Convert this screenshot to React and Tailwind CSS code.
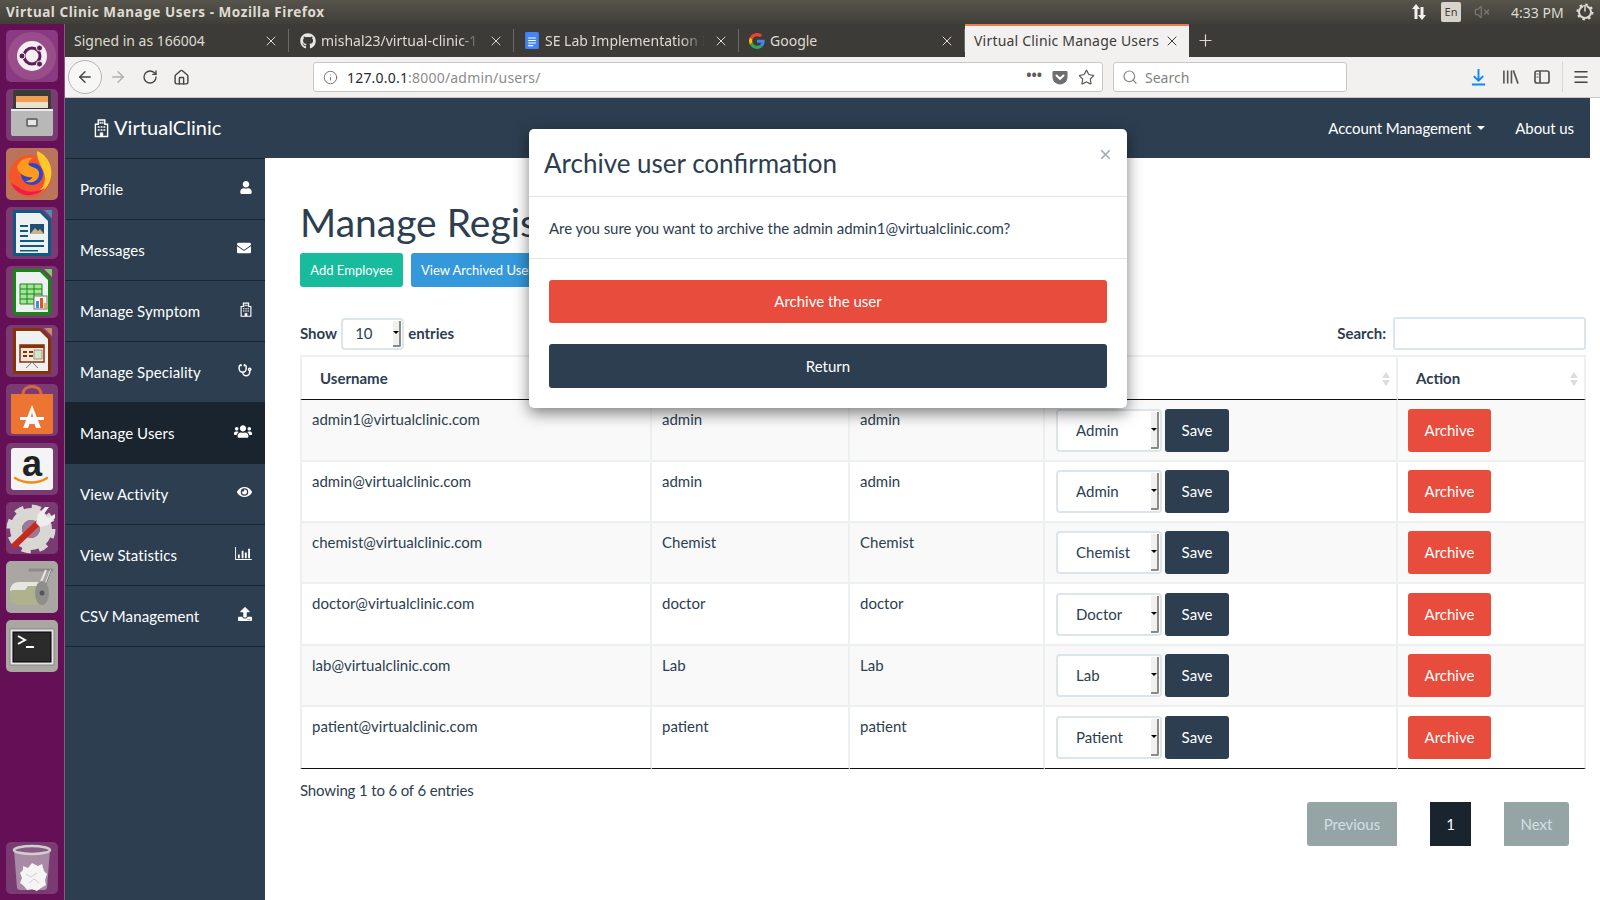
import { useState } from 'react';
import {
  ArrowLeft, ArrowRight, RotateCw, Home, Info, Star, Search, Menu, Plus, X, VolumeX, Stethoscope,
} from 'lucide-react';
import { FaGithub, FaUser, FaEnvelope, FaUsers, FaEye, FaUpload } from 'react-icons/fa';

const HospitalIcon = ({ className }) => (
  <svg viewBox="0 0 16 20" className={className} fill="none" stroke="currentColor" strokeWidth="1.5">
    <path d="M1.5 19V6h3V1.5h7V6h3v13z" />
    <path d="M6.5 3.2v2.6M9.5 3.2v2.6M6.5 4.5h3" strokeWidth="1" />
    <path d="M4 9h2M7 9h2M10 9h2M4 12h2M7 12h2M10 12h2" strokeWidth="1.6" />
    <path d="M6.5 19v-4h3v4" fill="currentColor" strokeWidth="0.5" />
  </svg>
);

const BarsIcon = ({ className }) => (
  <svg viewBox="0 0 18 14" className={className} fill="currentColor">
    <path d="M0 0h1v13h17v1H0z" />
    <path d="M3 8h2v4H3zM7 4h2v8H7zM10.500 6h2v6h-2zM14 2h2v10h-2z" />
  </svg>
);

const Pocket = () => (
  <svg viewBox="0 0 16 16" className="w-[16px] h-[16px]">
    <path d="M1 2.500h14v6a7 6.500 0 0 1-14 0z" fill="#6e6e6e" stroke="#6e6e6e" strokeLinejoin="round" />
    <path d="M4.500 6.500L8 9.800l3.500-3.300" fill="none" stroke="#fff" strokeWidth="2" strokeLinecap="round" />
  </svg>
);

const GoogleG = () => (
  <svg viewBox="0 0 48 48" className="w-[16px] h-[16px] shrink-0">
    <path fill="#EA4335" d="M24 9.500c3.500 0 6.700 1.300 9.100 3.500l6.800-6.800C35.800 2.400 30.300 0 24 0 14.600 0 6.500 5.400 2.600 13.200l7.900 6.200C12.400 13.700 17.700 9.500 24 9.500z" />
    <path fill="#4285F4" d="M46.900 24.500c0-1.600-.1-3.100-.4-4.500H24v9h12.900c-.6 3-2.200 5.500-4.700 7.200l7.700 6c4.500-4.200 7-10.300 7-17.700z" />
    <path fill="#FBBC05" d="M10.500 28.600c-.5-1.400-.8-3-.8-4.600s.3-3.200.8-4.600l-7.900-6.200C.9 16.500 0 20.100 0 24s.9 7.500 2.600 10.800z" />
    <path fill="#34A853" d="M24 48c6.500 0 11.900-2.100 15.900-5.800l-7.700-6c-2.200 1.400-4.900 2.300-8.200 2.300-6.300 0-11.600-4.200-13.500-9.900l-7.900 6.100C6.500 42.600 14.600 48 24 48z" />
  </svg>
);

const DocsIcon = () => (
  <svg viewBox="0 0 16 20" className="w-[16px] h-[17px] shrink-0">
    <rect width="16" height="20" rx="1.500" fill="#4285f4" />
    <path d="M3.500 7h9M3.500 10h9M3.500 13h9M3.500 16h6" stroke="#fff" strokeWidth="1.300" />
  </svg>
);

const tabs = [
  { title: 'Signed in as 166004', width: 'w-[224px]', pad: 'pl-[9px]', icon: null, fade: '' },
  { title: 'mishal23/virtual-clinic-1', width: 'w-[225px]', pad: 'pl-[11px]', icon: <FaGithub className="w-[16px] h-[16px] text-[#e8e6e0] shrink-0" />, fade: '[mask-image:linear-gradient(to_right,black_88%,transparent)]' },
  { title: 'SE Lab Implementation I', width: 'w-[225px]', pad: 'pl-[10px]', icon: <DocsIcon />, fade: '[mask-image:linear-gradient(to_right,black_85%,transparent)]' },
  { title: 'Google', width: 'w-[226px]', pad: 'pl-[10px]', icon: <GoogleG />, fade: '' },
];

// launcher icons, all drawn in a 52x52 box
const launcher = [
  {
    name: 'dash', tile: 'bg-[#8a3a80]',
    art: (
      <>
        <circle cx="26" cy="26" r="24" fill="#a0568f" opacity="0.7" />
        <circle cx="26" cy="26" r="15" fill="#f4eef2" />
        <circle cx="26" cy="26" r="8" fill="none" stroke="#5e1f57" strokeWidth="3" />
        <circle cx="33.500" cy="18" r="3" fill="#5e1f57" stroke="#f4eef2" />
        <circle cx="33.500" cy="34" r="3" fill="#5e1f57" stroke="#f4eef2" />
        <circle cx="16" cy="26" r="3" fill="#5e1f57" stroke="#f4eef2" />
      </>
    ),
  },
  {
    name: 'files', tile: 'bg-[#7a3a72]',
    art: (
      <>
        <rect x="7" y="1" width="38" height="22" rx="2" fill="#3b3b3b" />
        <rect x="10" y="7" width="32" height="6" fill="#ef9f52" />
        <rect x="10" y="13" width="32" height="6" fill="#e9e2cc" />
        <rect x="5" y="20" width="42" height="27" rx="2" fill="#b8b8b8" />
        <rect x="5" y="20" width="42" height="2" fill="#ececec" />
        <rect x="20" y="29" width="12" height="9" rx="2" fill="#707070" />
        <rect x="22" y="31" width="8" height="5" fill="#e6e6e6" />
      </>
    ),
  },
  {
    name: 'firefox', tile: 'bg-[#b9745a]',
    art: (
      <>
        <circle cx="24" cy="28" r="21" fill="#f4552a" />
        <path d="M31 3c15 6 19 25 9 37-4 4-9 7-15 7 12-3 17-14 12-25-2-5-6-9-6-19z" fill="#ffc72e" />
        <circle cx="26" cy="26" r="11" fill="#2f46c8" />
        <path d="M11 19c3-8 10-10 16-9-5 3-6 6-3 8 5 2 10 3 9 9-1 7-9 9-14 6 4 0 7-2 7-4-5 1-13-2-15-10z" fill="#ff9a1f" />
        <path d="M5 35c4 9 12 13 20 12 6 0 11-3 14-7-6 4-18 6-27-1z" fill="#e9204f" />
      </>
    ),
  },
  {
    name: 'writer', tile: 'bg-[#7a3a72]',
    art: (
      <>
        <path d="M7 3h28l10 10v34a2 2 0 0 1-2 2H9a2 2 0 0 1-2-2z" fill="#0f5a85" />
        <path d="M10 6h24l8 8v32H10z" fill="#eef1f2" />
        <path d="M38 3h8v8z" fill="#4b8fb8" />
        <path d="M14 18h8v2h-8zM14 23h8v2h-8zM14 28h8v2h-8zM14 33h24v2H14zM14 38h24v2H14zM14 43h18v1.500H14z" fill="#0f5a85" />
        <rect x="24" y="17" width="14" height="10" fill="#234f72" />
        <path d="M24 27l5-6 3 3 2-2 4 5z" fill="#c9b48a" />
      </>
    ),
  },
  {
    name: 'calc', tile: 'bg-[#7a3a72]',
    art: (
      <>
        <path d="M7 3h28l10 10v34a2 2 0 0 1-2 2H9a2 2 0 0 1-2-2z" fill="#128a12" />
        <path d="M10 6h24l8 8v32H10z" fill="#eef1f2" />
        <path d="M38 3h8v8z" fill="#7ccf6d" />
        <rect x="14" y="18" width="22" height="20" fill="#a7e29a" />
        <path d="M14 18h22v20H14zM14 23h22M14 28h22M14 33h22M21 18v20M28 18v20" fill="none" stroke="#128a12" />
        <rect x="28" y="30" width="13" height="13" fill="#f4f4f4" stroke="#777" />
        <path d="M30 35h3v7h-3z" fill="#3c8fd8" />
        <path d="M34 32h3v10h-3z" fill="#e0552b" />
        <path d="M38 37h2v5h-2z" fill="#efb72e" />
      </>
    ),
  },
  {
    name: 'impress', tile: 'bg-[#7a3a72]',
    art: (
      <>
        <path d="M7 3h28l10 10v34a2 2 0 0 1-2 2H9a2 2 0 0 1-2-2z" fill="#8a3108" />
        <path d="M10 6h24l8 8v32H10z" fill="#eef1f2" />
        <path d="M38 3h8v8z" fill="#c98a66" />
        <rect x="14" y="20" width="24" height="17" fill="#f7e7d9" stroke="#8a3108" strokeWidth="1.500" />
        <rect x="14" y="20" width="24" height="3" fill="#8a3108" />
        <path d="M17 26h4v2h-4zM17 30h4v2h-4zM23 26h4v2h-4zM23 30h4v2h-4z" fill="#8a3108" />
        <rect x="28" y="25" width="8" height="9" fill="#d4e6c8" stroke="#666" strokeWidth="0.600" />
        <path d="M20 43l6-6 6 6" fill="none" stroke="#777" />
      </>
    ),
  },
  {
    name: 'software', tile: 'bg-[#7a3a72]',
    art: (
      <>
        <path d="M17 10c0-10 18-10 18 0" fill="none" stroke="#d7693a" strokeWidth="3" />
        <path d="M5 10h42v38a2 2 0 0 1-2 2H7a2 2 0 0 1-2-2z" fill="#ee7434" />
        <path d="M26 21l-9 23h5l1.500-4h5l1.500 4h5zM25 33l1-5 1 5z" fill="#fff" />
        <rect x="14" y="33" width="24" height="3" fill="#fff" />
      </>
    ),
  },
  {
    name: 'amazon', tile: 'bg-[#7a3a72]',
    art: (
      <>
        <rect x="5" y="5" width="42" height="42" rx="3" fill="#f4f4f4" />
        <text x="26" y="33" textAnchor="middle" fontFamily="'Liberation Sans', sans-serif" fontWeight="700" fontSize="36" fill="#222">a</text>
        <path d="M9 35c10 6 23 6 32 0" fill="none" stroke="#f08c14" strokeWidth="2.500" strokeLinecap="round" />
      </>
    ),
  },
  {
    name: 'settings', tile: 'bg-[#7a3a72]',
    art: (
      <>
        <circle cx="25" cy="27" r="15" fill="none" stroke="#d9d7d3" strokeWidth="12" />
        <circle cx="25" cy="27" r="22" fill="none" stroke="#d9d7d3" strokeWidth="5" strokeDasharray="9 8.300" />
        <circle cx="25" cy="27" r="9" fill="#9a7a94" />
        <path d="M9 43L32 21" stroke="#c8281e" strokeWidth="6" strokeLinecap="round" />
        <path d="M30 21l2-9 7-7 4 0-5 7 4 4 7-4 0 4-7 7-8 2z" fill="#eeeeee" />
      </>
    ),
  },
  {
    name: 'disks', tile: 'bg-[#aaa6a2]',
    art: (
      <>
        <path d="M24 9h22" stroke="#8b8b88" strokeWidth="3" strokeLinecap="round" />
        <path d="M45 9L36 33M40 9L32 28" stroke="#e4e4e2" strokeWidth="2" />
        <path d="M45.500 9L36.500 33" stroke="#777" strokeWidth="1" />
        <rect x="4" y="21" width="35" height="23" rx="9" fill="#aeb38e" />
        <path d="M4 30c0-5 3-9 9-9h26v4H22l-3 4H7z" fill="#e6e6de" />
        <ellipse cx="36" cy="32" rx="7" ry="12" fill="#8e8e8c" />
        <circle cx="36" cy="32" r="2.500" fill="#555" />
      </>
    ),
  },
  {
    name: 'terminal', tile: 'bg-[#aaa6a2]',
    art: (
      <>
        <rect x="4" y="9" width="44" height="36" fill="#e6e6e6" stroke="#8a8a8a" />
        <rect x="7" y="12" width="38" height="30" fill="#2b2b2b" stroke="#000" />
        <path d="M12 16l7 4-7 4" fill="none" stroke="#fff" strokeWidth="2" />
        <path d="M20 27h8" stroke="#fff" strokeWidth="2" />
      </>
    ),
  },
];

const trash = {
  name: 'trash', tile: 'bg-[#7a3a72]',
  art: (
    <>
      <path d="M8 8l3 38a3 3 0 0 0 3 2h24a3 3 0 0 0 3-2l3-38z" fill="#a98aa4" />
      <ellipse cx="26" cy="8" rx="18" ry="4" fill="#8a5a84" stroke="#cfcfcf" strokeWidth="2.500" />
      <path d="M17 24l5 2 4-5 6 3 4-2 2 7 3 3-2 6 1 5-5 3-4 3-5-2-5 1-3-4-4-3 2-5-2-5 3-3z" fill="#f5f5f5" />
      <path d="M20 32l5 3 6-4M23 41l5-4 5 4" fill="none" stroke="#cfcfcf" />
    </>
  ),
};

const sideItems = [
  { label: 'Profile', icon: <FaUser className="w-[12px] h-[13px]" /> },
  { label: 'Messages', icon: <FaEnvelope className="w-[16px] h-[14px]" /> },
  { label: 'Manage Symptom', icon: <HospitalIcon className="w-[12px] h-[15px]" /> },
  { label: 'Manage Speciality', icon: <Stethoscope className="w-[14px] h-[15px]" strokeWidth={2.500} /> },
  { label: 'Manage Users', icon: <FaUsers className="w-[18px] h-[17px]" />, active: true },
  { label: 'View Activity', icon: <FaEye className="w-[15px] h-[14px]" /> },
  { label: 'View Statistics', icon: <BarsIcon className="w-[17px] h-[13px]" /> },
  { label: 'CSV Management', icon: <FaUpload className="w-[14px] h-[14px]" /> },
];

const users = [
  { email: 'admin1@virtualclinic.com', name: 'admin', type: 'admin', role: 'Admin', h: 'h-[62px]' },
  { email: 'admin@virtualclinic.com', name: 'admin', type: 'admin', role: 'Admin', h: 'h-[61px]' },
  { email: 'chemist@virtualclinic.com', name: 'Chemist', type: 'Chemist', role: 'Chemist', h: 'h-[61px]' },
  { email: 'doctor@virtualclinic.com', name: 'doctor', type: 'doctor', role: 'Doctor', h: 'h-[62px]' },
  { email: 'lab@virtualclinic.com', name: 'Lab', type: 'Lab', role: 'Lab', h: 'h-[61px]' },
  { email: 'patient@virtualclinic.com', name: 'patient', type: 'patient', role: 'Patient', h: 'h-[62px]' },
];

const SortArrows = () => (
  <span className="absolute right-[6px] top-[15px] flex flex-col gap-[2px]">
    <span className="w-0 h-0 border-x-[4px] border-x-transparent border-b-[6px] border-b-[#dcdcdc]" />
    <span className="w-0 h-0 border-x-[4px] border-x-transparent border-t-[6px] border-t-[#dcdcdc]" />
  </span>
);

// the old Firefox drop-down: a white box with a bevelled arrow strip on the right
const OldSelect = ({ value, options, className, pad = 'pl-[18px]' }) => {
  const [current, setCurrent] = useState(value);
  return (
    <span className={`relative inline-block ${className}`}>
      <select
        value={current}
        onChange={(e) => setCurrent(e.target.value)}
        className={`appearance-none w-full h-full bg-white border-2 border-[#dce4ec] rounded-[4px] ${pad} text-[15px] text-[#2c3e50] outline-none`}
      >
        {options.map((o) => <option key={o}>{o}</option>)}
      </select>
      <span className="absolute right-[3px] top-[3px] bottom-[3px] w-[8px] bg-[#f1f0ee] border-r-2 border-b-2 border-[#8a8a86] rounded-br-[2px] flex items-center justify-center pointer-events-none">
        <span className="w-0 h-0 border-x-[3px] border-x-transparent border-t-[3px] border-t-black" />
      </span>
    </span>
  );
};

const App = () => {
  return (
    <div className="w-[1600px] h-[900px] overflow-hidden flex flex-col bg-white font-['Lato',sans-serif] text-[15px] text-[#2c3e50]">
      {/* ubuntu panel */}
      <div className="h-[24px] shrink-0 bg-gradient-to-b from-[#57544b] to-[#3f3e39] flex items-center pl-[6px] pr-[6px] font-['Noto_Sans',sans-serif] text-[#dfdbd2]">
        <span className="text-[13.500px] font-bold tracking-[0.55px]">Virtual Clinic Manage Users - Mozilla Firefox</span>
        <div className="ml-auto flex items-center">
          <svg viewBox="0 0 18 18" className="w-[18px] h-[18px] mr-[13px]" fill="#f2f1ed">
            <path d="M6 1l4 5H7.500v10h-3V6H2zM12 17l-4-5h2.500V4h3v8H16z" />
          </svg>
          <span className="w-[20px] h-[20px] bg-[#d8d4cc] rounded-[2px] text-[#3c3b37] text-[11px] flex items-center justify-center mr-[13px]">En</span>
          <VolumeX className="w-[16px] h-[16px] text-[#77756d] mr-[21px]" />
          <span className="text-[14px] w-[54px] text-[#dfdbd2] mr-[11px]">4:33 PM</span>
          <svg viewBox="0 0 18 18" className="w-[18px] h-[18px]" fill="none" stroke="#dfdbd2">
            <circle cx="9" cy="9" r="6" strokeWidth="2" />
            <circle cx="9" cy="9" r="7.500" strokeWidth="2" strokeDasharray="2.500 3.390" />
            <circle cx="9" cy="9" r="3.500" stroke="#3f3e39" strokeWidth="1.500" />
            <path d="M9 3v6" stroke="#3f3e39" strokeWidth="3" />
            <path d="M9 2.500v6" strokeWidth="1.500" />
          </svg>
        </div>
      </div>

      <div className="flex-1 flex min-h-0">
        {/* launcher */}
        <div className="w-[65px] shrink-0 bg-[#640f56] border-r border-[#8a5a82] flex flex-col items-start pl-[6px] pt-[6px] pb-[6px] gap-[7px]">
          {launcher.map((item) => (
            <div key={item.name} className={`w-[52px] h-[52px] rounded-[5px] ${item.tile}`}>
              <svg viewBox="0 0 52 52" className="w-[52px] h-[52px]">{item.art}</svg>
            </div>
          ))}
          <div className={`mt-auto w-[52px] h-[52px] rounded-[5px] ${trash.tile}`}>
            <svg viewBox="0 0 52 52" className="w-[52px] h-[52px]">{trash.art}</svg>
          </div>
        </div>

        <div className="flex-1 min-w-0 flex flex-col relative">
          {/* firefox tabs */}
          <div className="h-[33px] shrink-0 bg-[#3c3b37] flex items-center font-['Noto_Sans',sans-serif] text-[14px] text-[#dfdbd2]">
            {tabs.map((t) => (
              <div key={t.title} className={`${t.width} ${t.pad} h-[23px] flex items-center gap-[5px] border-r border-[#6b6a64] pr-[9px] shrink-0`}>
                {t.icon}
                <span className={`flex-1 whitespace-nowrap overflow-hidden ${t.fade}`}>{t.title}</span>
                <X className="w-[16px] h-[16px] shrink-0 ml-[3px]" strokeWidth={1.500} />
              </div>
            ))}
            <div className="w-[224px] h-[33px] pl-[9px] pr-[9px] pb-[2px] bg-[#f2f1f0] border-t-2 border-[#ef7a4f] text-[#3c3b37] flex items-center shrink-0">
              <span className="flex-1 whitespace-nowrap overflow-hidden tracking-[0.2px]">Virtual Clinic Manage Users</span>
              <X className="w-[16px] h-[16px] shrink-0" strokeWidth={1.500} />
            </div>
            <Plus className="w-[19px] h-[19px] ml-[7px] text-[#dfdbd2]" strokeWidth={1.500} />
          </div>

          {/* firefox toolbar */}
          <div className="h-[41px] shrink-0 bg-[#f2f1f0] border-b border-[#c8c7c5] flex items-center pl-[3px] font-['Noto_Sans',sans-serif] text-[14px]">
            <span className="w-[34px] h-[34px] rounded-full border border-[#b5b4b2] bg-[#f7f7f6] flex items-center justify-center shrink-0">
              <ArrowLeft className="w-[18px] h-[18px] text-[#45443f]" strokeWidth={1.800} />
            </span>
            <ArrowRight className="w-[18px] h-[18px] text-[#b0afac] ml-[7px]" strokeWidth={1.800} />
            <RotateCw className="w-[16px] h-[16px] text-[#45443f] ml-[15px]" strokeWidth={2} />
            <Home className="w-[17px] h-[17px] text-[#45443f] ml-[15px]" strokeWidth={2} />
            <div className="w-[790px] h-[30px] ml-[123px] bg-white border border-[#c8c7c5] rounded-[3px] flex items-center pl-[9px] pr-[7px]">
              <Info className="w-[15px] h-[15px] text-[#77766f]" strokeWidth={1.600} />
              <span className="ml-[9px] text-[#2a2a28] tracking-[0.2px]">127.0.0.1</span>
              <span className="text-[#8d8c89] tracking-[0.2px]">:8000/admin/users/</span>
              <span className="ml-auto text-[#5c5b58] font-bold text-[14px] mb-[6px]">•••</span>
              <span className="ml-[10px]"><Pocket /></span>
              <Star className="w-[17px] h-[17px] text-[#5c5b58] ml-[10px]" strokeWidth={1.700} />
            </div>
            <div className="w-[234px] h-[30px] ml-[10px] bg-white border border-[#c8c7c5] rounded-[3px] flex items-center pl-[8px]">
              <Search className="w-[16px] h-[16px] text-[#85847f]" strokeWidth={1.800} />
              <span className="ml-[7px] text-[#85847f]">Search</span>
            </div>
            <svg viewBox="0 0 16 18" className="w-[15px] h-[17px] ml-[124px]" fill="none" stroke="#0a84ff" strokeWidth="2">
              <path d="M8 0v12M3 7.500l5 5 5-5M1 16.500h14" />
            </svg>
            <svg viewBox="0 0 18 16" className="w-[17px] h-[16px] ml-[16px]" fill="none" stroke="#55544f" strokeWidth="1.700">
              <path d="M2 1v14M6 1v14M10 1v14M12 1l5 14" />
            </svg>
            <svg viewBox="0 0 16 16" className="w-[16px] h-[16px] ml-[15px]" fill="none" stroke="#55544f" strokeWidth="1.700">
              <rect x="1" y="2" width="14" height="12" rx="2" />
              <path d="M6 2v12" />
              <path d="M2.500 5h2M2.500 8h2" strokeWidth="1.200" />
            </svg>
            <span className="w-px h-[30px] bg-[#d6d5d3] ml-[12px]" />
            <Menu className="w-[18px] h-[18px] text-[#45443f] ml-[9px]" strokeWidth={2} />
          </div>

          {/* page */}
          <div className="flex-1 min-h-0 flex flex-col">
            <div className="h-[60px] w-[1525px] shrink-0 bg-[#2c3e50] flex items-center text-white">
              <div className="flex items-center pl-[29px]">
                <HospitalIcon className="w-[15px] h-[20px]" />
                <span className="text-[20px] leading-[26px] ml-[5px] -mt-[2px] tracking-[0.05px]">VirtualClinic</span>
              </div>
              <div className="ml-auto flex items-center pr-[16px]">
                <span className="tracking-[-0.1px]">Account Management</span>
                <span className="ml-[6px] w-0 h-0 border-x-[4px] border-x-transparent border-t-[4px] border-t-white" />
                <span className="ml-[30px] tracking-[-0.1px]">About us</span>
              </div>
            </div>

            <div className="flex-1 min-h-0 flex">
              {/* sidebar */}
              <div className="w-[200px] shrink-0 bg-[#2c3e50] text-white border-t border-[#1a252f]">
                {sideItems.map((item) => (
                  <div
                    key={item.label}
                    className={`h-[61px] flex items-center pl-[15px] pr-[13px] border-b border-[#1a252f] ${item.active ? 'bg-[#1a242f]' : ''}`}
                  >
                    <span className="tracking-[0.1px]">{item.label}</span>
                    <span className="ml-auto -mt-[4px]">{item.icon}</span>
                  </div>
                ))}
              </div>

              {/* main */}
              <div className="w-[1325px] pl-[35px] pr-[4px] min-w-0">
                <h1 className="text-[39px] leading-[43px] mt-[43px]">Manage Registered Users</h1>
                <div className="flex gap-[8px] mt-[9px]">
                  <button className="w-[103px] h-[34px] pt-[1px] bg-[#18bc9c] text-white text-[13px] rounded-[3px]">Add Employee</button>
                  <button className="h-[34px] pt-[1px] px-[10px] bg-[#3498db] text-white text-[13px] rounded-[3px]">View Archived Users</button>
                </div>

                <div className="flex items-center mt-[30px] h-[33px] font-bold">
                  <span>Show</span>
                  <OldSelect value="10" options={['10', '25', '50', '100']} className="w-[63px] h-[32px] ml-[4px] mr-[4px] font-normal" pad="pl-[12px]" />
                  <span>entries</span>
                  <span className="ml-auto mr-[7px]">Search:</span>
                  <input className="w-[193px] h-[33px] border-2 border-[#dce4ec] rounded-[3px] outline-none" />
                </div>

                <table className="w-[1286px] table-fixed border-separate border-spacing-0 mt-[5px]">
                  <colgroup>
                    <col className="w-[352px]" />
                    <col className="w-[198px]" />
                    <col className="w-[195px]" />
                    <col className="w-[353px]" />
                    <col className="w-[188px]" />
                  </colgroup>
                  <thead>
                    <tr className="h-[45px]">
                      {['Username', 'Name', 'Type', 'Role', 'Action'].map((h, c) => (
                        <th key={h} className={`relative text-left font-bold pl-[18px] border-t-2 border-r-2 border-b border-[#ecf0f1] border-b-[#111] ${c === 0 ? 'border-l-2' : ''}`}>
                          {h}
                          <SortArrows />
                        </th>
                      ))}
                    </tr>
                  </thead>
                  <tbody>
                    {users.map((u, i) => {
                      const last = i === users.length - 1;
                      const edge = `border-r-2 border-[#ecf0f1] ${last ? 'border-b border-b-[#111]' : 'border-b-2'}`;
                      return (
                        <tr key={u.email} className={`${u.h} ${i % 2 === 0 ? 'bg-[#f9f9f9]' : 'bg-white'}`}>
                          <td className={`align-top pt-[8px] pl-[10px] border-l-2 ${edge}`}>{u.email}</td>
                          <td className={`align-top pt-[8px] pl-[10px] ${edge}`}>{u.name}</td>
                          <td className={`align-top pt-[8px] pl-[10px] ${edge}`}>{u.type}</td>
                          <td className={`align-middle pl-[11px] ${edge}`}>
                            <div className="flex items-center gap-[3px]">
                              <OldSelect value={u.role} options={['Admin', 'Chemist', 'Doctor', 'Lab', 'Patient']} className="w-[106px] h-[43px]" />
                              <button className="w-[64px] h-[43px] bg-[#2c3e50] text-white rounded-[3px]">Save</button>
                            </div>
                          </td>
                          <td className={`align-middle pl-[10px] ${edge}`}>
                            <button className="w-[83px] h-[43px] bg-[#e74c3c] text-white rounded-[3px]">Archive</button>
                          </td>
                        </tr>
                      );
                    })}
                  </tbody>
                </table>

                <div className="mt-[12px] leading-[18px] tracking-[-0.15px]">Showing 1 to 6 of 6 entries</div>
                <div className="flex justify-end pr-[17px] mt-[3px] text-[15px]">
                  <span className="w-[90px] h-[44px] bg-[#95a5a6] text-[#cfe0e4] rounded-l-[3px] flex items-center justify-center">Previous</span>
                  <span className="w-[41px] h-[44px] ml-[33px] bg-[#1a242f] text-white flex items-center justify-center">1</span>
                  <span className="w-[65px] h-[44px] ml-[33px] bg-[#95a5a6] text-[#cfe0e4] rounded-r-[3px] flex items-center justify-center">Next</span>
                </div>
              </div>
            </div>
          </div>

          {/* modal */}
          <div className="absolute left-[464px] top-[105px] w-[598px] h-[279px] bg-white rounded-[5px] shadow-[0_5px_15px_rgba(0,0,0,0.5)]">
            <div className="h-[68px] border-b border-[#e5e5e5] relative flex items-center pl-[15px]">
              <h4 className="text-[26px] leading-none">Archive user confirmation</h4>
              <X className="absolute right-[14px] top-[18px] w-[15px] h-[15px] text-[#a2acb6]" strokeWidth={2.800} />
            </div>
            <div className="h-[62px] border-b border-[#e5e5e5] flex items-center pl-[20px] pt-[1px] tracking-[-0.03px]">
              Are you sure you want to archive the admin admin1@virtualclinic.com?
            </div>
            <div className="px-[20px] pt-[21px] flex flex-col gap-[21px]">
              <button className="h-[43px] bg-[#e74c3c] text-white rounded-[3px]">Archive the user</button>
              <button className="h-[44px] bg-[#2c3e50] text-white rounded-[3px]">Return</button>
            </div>
          </div>
        </div>
      </div>
    </div>
  );
};

export default App;
